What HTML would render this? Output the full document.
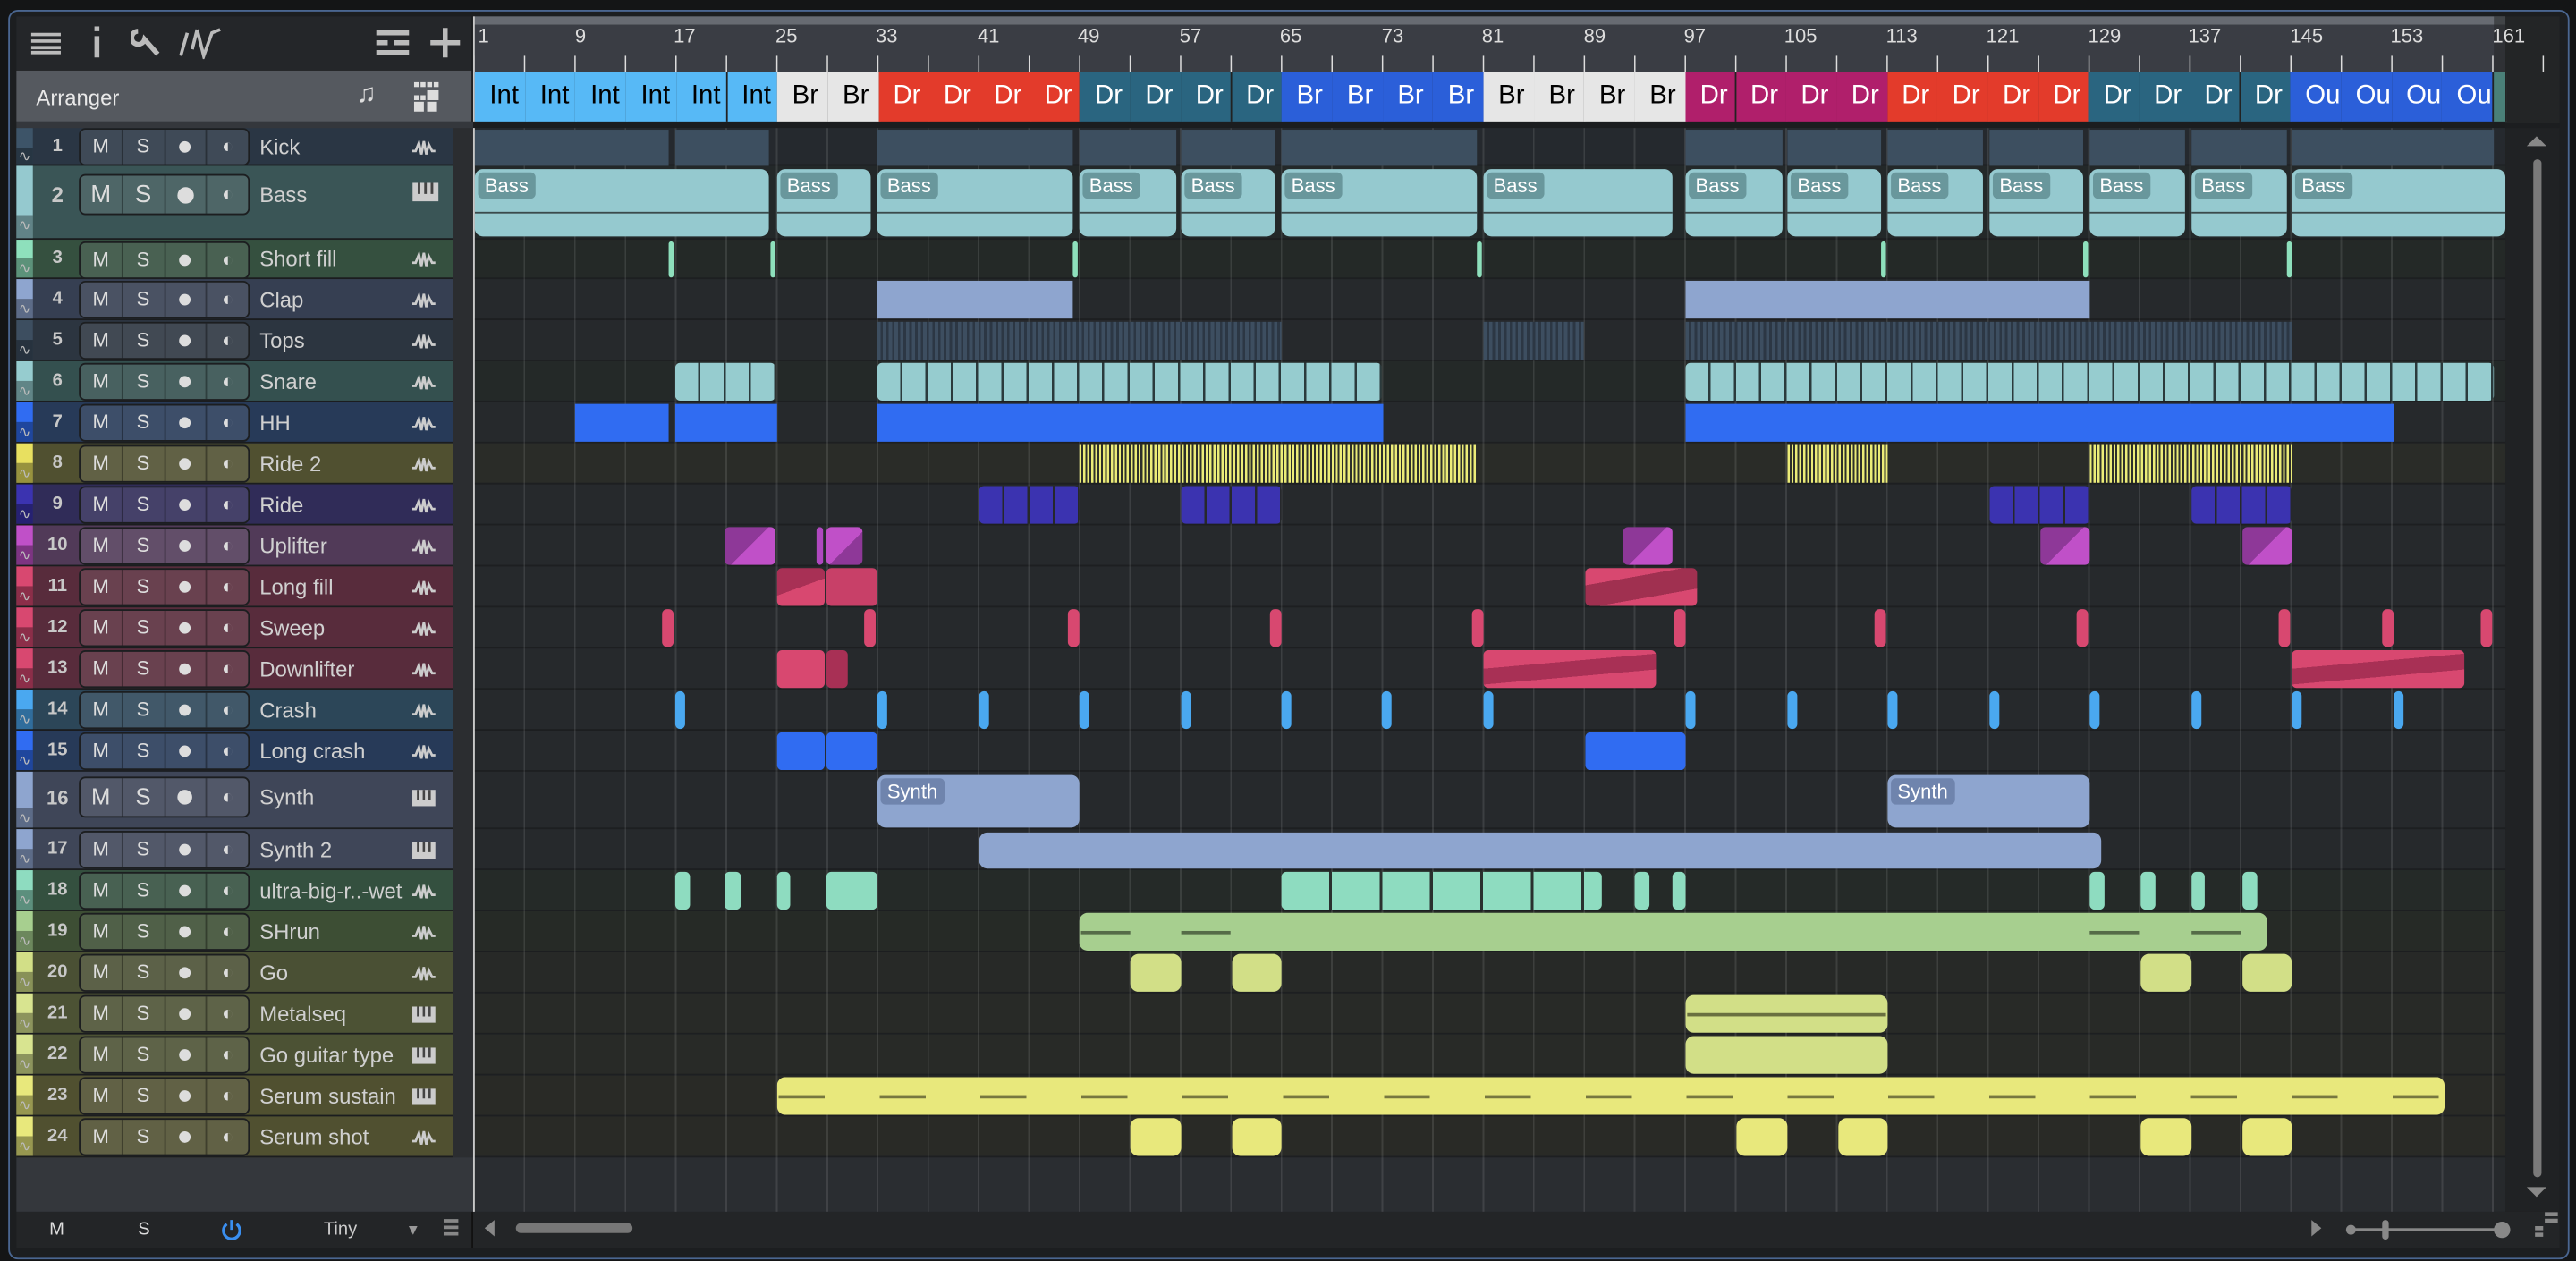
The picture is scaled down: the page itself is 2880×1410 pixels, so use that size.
<!DOCTYPE html>
<html><head><meta charset="utf-8"><style>
html,body{margin:0;padding:0;background:#141516;overflow:hidden;width:2880px;height:1410px}
#s{position:absolute;left:0;top:0;width:1568px;height:768px;transform:scale(1.83674,1.83594);transform-origin:0 0;font-family:"Liberation Sans",sans-serif;background:#141516}
.a{position:absolute}
.frame{left:5px;top:6px;width:1557px;height:759px;border:1px solid #4a6690;border-radius:6px;background:#1c1e20}
.hd{position:absolute;left:10px;width:266px;border-bottom:1px solid #1b1d1f;box-sizing:border-box}
.st{position:absolute;left:0;top:0;width:10px;height:100%}
.st2{position:absolute;left:0;bottom:0;width:10px;height:12px;background:rgba(0,0,0,.35);color:#bbb;font-size:9px;line-height:12px;text-align:center}
.num{position:absolute;left:12px;width:26px;text-align:center;color:#c8c8c8;font-size:11px;font-weight:bold}
.btns{position:absolute;left:38px;width:102px;height:21px;border:1px solid #1c1e20;border-radius:4px;background:rgba(255,255,255,.1);display:flex}
.btns span{flex:1;border-right:1px solid rgba(0,0,0,.35);color:#ddd;font-size:12px;text-align:center;line-height:21px}
.btns span:last-child{border-right:0}
.dot{display:inline-block;width:7px;height:7px;border-radius:50%;background:#ddd;vertical-align:middle}
.nm{position:absolute;left:148px;color:#d0d0d0;font-size:13px}
.ic{position:absolute;left:240px;width:16px;height:10px}
.ln{position:absolute;left:289px;width:1236px;border-bottom:1px solid #1d1f21;box-sizing:border-box}
.c{position:absolute;border-radius:3px;box-sizing:border-box}
.sec{position:absolute;top:44px;height:30px;font-size:16px;line-height:30px;text-indent:9px;overflow:hidden;white-space:nowrap;border-right:1px solid #222}
.lab{position:absolute;left:2px;top:2px;background:rgba(70,110,115,.55);color:#fff;font-size:12px;padding:1px 4px;border-radius:3px}
.rl{position:absolute;top:12px;color:#ddd;font-size:12px}
</style></head><body><div id="s">
<svg width="0" height="0" style="position:absolute"><defs>
<symbol id="wv" viewBox="0 0 16 10"><path d="M1 7h2l2-5 1.5 7 1.5-8 1.5 8 1.5-6 2 4h2" fill="none" stroke="#ccc" stroke-width="1.5"/></symbol>
<symbol id="pn" viewBox="0 0 16 10"><rect x="1" y="0" width="14" height="10" fill="#ccc"/><path d="M4.5 0v6M8 0v6M11.5 0v6" stroke="#444" stroke-width="1.4"/></symbol>
</defs></svg>
<div class="a frame"></div>
<!-- toolbar -->
<div class="a" style="left:10px;top:10px;width:277px;height:33px;background:#242629"></div>
<div class="a" style="left:10px;top:43px;width:277px;height:31px;background:#55595f"></div>
<div class="a" style="left:22px;top:52px;color:#e8e8e8;font-size:13px">Arranger</div>
<svg class="a" style="left:18px;top:18px" width="20" height="16"><path d="M1 3h18M1 7h18M1 11h18M1 14h18" stroke="#bbb" stroke-width="2"/></svg>
<svg class="a" style="left:55px;top:16px" width="8" height="20"><rect x="2.5" y="0" width="3" height="3" fill="#bbb"/><rect x="2.5" y="6" width="3" height="13" fill="#bbb"/></svg>
<svg class="a" style="left:80px;top:16px" width="20" height="20"><path d="M4 3a4 4 0 1 0 4 5l8 9" fill="none" stroke="#bbb" stroke-width="3"/></svg>
<svg class="a" style="left:109px;top:16px" width="28" height="20"><path d="M1 18L5 4M8 14L11 2M11 2L15 18L20 4L25 2" fill="none" stroke="#bbb" stroke-width="2"/></svg>
<svg class="a" style="left:229px;top:18px" width="20" height="16"><path d="M0 2h20M0 8h7M11 8h9M0 14h20" stroke="#bbb" stroke-width="3"/></svg>
<svg class="a" style="left:261px;top:16px" width="20" height="20"><path d="M10 1v18M1 10h18" stroke="#bbb" stroke-width="3"/></svg>
<div class="a" style="left:217px;top:49px;color:#ddd;font-size:16px">♫</div>
<svg class="a" style="left:252px;top:50px" width="18" height="18"><g fill="#ddd"><rect x="0" y="0" width="3" height="3"/><rect x="4" y="0" width="3" height="3"/><rect x="8" y="0" width="3" height="3"/><rect x="12" y="0" width="3" height="3"/><rect x="8" y="5" width="7" height="6"/><rect x="0" y="8" width="3" height="3"/><rect x="4" y="8" width="3" height="3"/><rect x="0" y="12" width="6" height="6"/><rect x="8" y="12" width="6" height="6"/></g></svg>
<!-- ruler -->
<div class="a" style="left:288px;top:10px;width:1237px;height:34px;background:#3a3d44"></div>
<div class="a" style="left:288px;top:10px;width:1237px;height:5px;background:#676b72"></div>
<div class="a" style="left:1518px;top:10px;width:40px;height:65px;background:rgba(40,42,44,.6)"></div>
<div class="a" style="left:288px;top:10px;width:1px;height:728px;background:#c8c8c8"></div>
<div class="rl" style="left:291px;top:15px">1</div><div class="rl" style="left:350px;top:15px">9</div><div class="rl" style="left:410px;top:15px">17</div><div class="rl" style="left:472px;top:15px">25</div><div class="rl" style="left:533px;top:15px">33</div><div class="rl" style="left:595px;top:15px">41</div><div class="rl" style="left:656px;top:15px">49</div><div class="rl" style="left:718px;top:15px">57</div><div class="rl" style="left:779px;top:15px">65</div><div class="rl" style="left:841px;top:15px">73</div><div class="rl" style="left:902px;top:15px">81</div><div class="rl" style="left:964px;top:15px">89</div><div class="rl" style="left:1025px;top:15px">97</div><div class="rl" style="left:1086px;top:15px">105</div><div class="rl" style="left:1148px;top:15px">113</div><div class="rl" style="left:1209px;top:15px">121</div><div class="rl" style="left:1271px;top:15px">129</div><div class="rl" style="left:1332px;top:15px">137</div><div class="rl" style="left:1394px;top:15px">145</div><div class="rl" style="left:1455px;top:15px">153</div><div class="rl" style="left:1517px;top:15px">161</div>
<div class="a" style="left:289px;top:34px;width:1262px;height:10px;background:repeating-linear-gradient(90deg,transparent 0 30px,#ddd 30px 31.72px);background-size:30.72px 10px;background-position:0 0"></div>
<!-- sections -->
<div class="a" style="left:288px;top:74px;width:1237px;height:4px;background:#1b1d1f"></div>
<div id="secs"></div>
<div class="sec" style="left:289px;width:30.7px;background:#57b9f6;color:#000">Int</div><div class="sec" style="left:319.7px;width:30.7px;background:#57b9f6;color:#000">Int</div><div class="sec" style="left:350.4px;width:30.7px;background:#57b9f6;color:#000">Int</div><div class="sec" style="left:381.1px;width:30.7px;background:#57b9f6;color:#000">Int</div><div class="sec" style="left:411.8px;width:30.7px;background:#57b9f6;color:#000">Int</div><div class="sec" style="left:442.5px;width:30.7px;background:#57b9f6;color:#000">Int</div>
<div class="sec" style="left:473.2px;width:30.7px;background:#e6e6e6;color:#000">Br</div><div class="sec" style="left:503.9px;width:30.7px;background:#e6e6e6;color:#000">Br</div>
<div class="sec" style="left:534.6px;width:30.7px;background:#e33b2b;color:#fff">Dr</div><div class="sec" style="left:565.3px;width:30.7px;background:#e33b2b;color:#fff">Dr</div><div class="sec" style="left:596px;width:30.7px;background:#e33b2b;color:#fff">Dr</div><div class="sec" style="left:626.7px;width:30.7px;background:#e33b2b;color:#fff">Dr</div>
<div class="sec" style="left:657.4px;width:30.7px;background:#2a6580;color:#fff">Dr</div><div class="sec" style="left:688.1px;width:30.7px;background:#2a6580;color:#fff">Dr</div><div class="sec" style="left:718.8px;width:30.7px;background:#2a6580;color:#fff">Dr</div><div class="sec" style="left:749.5px;width:30.7px;background:#2a6580;color:#fff">Dr</div>
<div class="sec" style="left:780.2px;width:30.7px;background:#2b5fd9;color:#fff">Br</div><div class="sec" style="left:810.9px;width:30.7px;background:#2b5fd9;color:#fff">Br</div><div class="sec" style="left:841.6px;width:30.7px;background:#2b5fd9;color:#fff">Br</div><div class="sec" style="left:872.3px;width:30.7px;background:#2b5fd9;color:#fff">Br</div>
<div class="sec" style="left:903px;width:30.7px;background:#e6e6e6;color:#000">Br</div><div class="sec" style="left:933.7px;width:30.7px;background:#e6e6e6;color:#000">Br</div><div class="sec" style="left:964.4px;width:30.7px;background:#e6e6e6;color:#000">Br</div><div class="sec" style="left:995.1px;width:30.7px;background:#e6e6e6;color:#000">Br</div>
<div class="sec" style="left:1025.8px;width:30.7px;background:#b01f6b;color:#fff">Dr</div><div class="sec" style="left:1056.5px;width:30.7px;background:#b01f6b;color:#fff">Dr</div><div class="sec" style="left:1087.2px;width:30.7px;background:#b01f6b;color:#fff">Dr</div><div class="sec" style="left:1117.9px;width:30.7px;background:#b01f6b;color:#fff">Dr</div>
<div class="sec" style="left:1148.6px;width:30.7px;background:#e33b2b;color:#fff">Dr</div><div class="sec" style="left:1179.3px;width:30.7px;background:#e33b2b;color:#fff">Dr</div><div class="sec" style="left:1210px;width:30.7px;background:#e33b2b;color:#fff">Dr</div><div class="sec" style="left:1240.7px;width:30.7px;background:#e33b2b;color:#fff">Dr</div>
<div class="sec" style="left:1271.4px;width:30.7px;background:#2a6580;color:#fff">Dr</div><div class="sec" style="left:1302.1px;width:30.7px;background:#2a6580;color:#fff">Dr</div><div class="sec" style="left:1332.8px;width:30.7px;background:#2a6580;color:#fff">Dr</div><div class="sec" style="left:1363.5px;width:30.7px;background:#2a6580;color:#fff">Dr</div>
<div class="sec" style="left:1394.2px;width:30.7px;background:#2b5fd9;color:#fff">Ou</div><div class="sec" style="left:1424.9px;width:30.7px;background:#2b5fd9;color:#fff">Ou</div><div class="sec" style="left:1455.6px;width:30.7px;background:#2b5fd9;color:#fff">Ou</div><div class="sec" style="left:1486.3px;width:31px;background:#2b5fd9;color:#fff">Ou</div>
<div class="sec" style="left:1517.5px;width:7px;background:#4a8078"></div>
<!-- lane area -->
<div class="a" style="left:289px;top:78px;width:1236px;height:660px;background:#26292c"></div>
<div class="a" style="left:1525px;top:78px;width:33px;height:660px;background:#202224"></div>
<div class="ln" style="top:78px;height:23px;background:#25292e"></div>
<div class="ln" style="top:101px;height:45px;background:#232829"></div>
<div class="ln" style="top:146px;height:24px;background:#242927"></div>
<div class="ln" style="top:170px;height:25px"></div><div class="ln" style="top:195px;height:25px"></div>
<div class="ln" style="top:220px;height:25px;background:#242928"></div><div class="ln" style="top:245px;height:25px"></div>
<div class="ln" style="top:270px;height:25px;background:#2a2c28"></div><div class="ln" style="top:295px;height:25px"></div>
<div class="ln" style="top:320px;height:25px"></div><div class="ln" style="top:345px;height:25px"></div><div class="ln" style="top:370px;height:25px"></div><div class="ln" style="top:395px;height:25px"></div><div class="ln" style="top:420px;height:25px"></div><div class="ln" style="top:445px;height:25px"></div><div class="ln" style="top:470px;height:35px"></div><div class="ln" style="top:505px;height:25px"></div>
<div class="ln" style="top:530px;height:25px;background:#252a28"></div><div class="ln" style="top:555px;height:25px;background:#262a26"></div><div class="ln" style="top:580px;height:25px;background:#272927"></div><div class="ln" style="top:605px;height:25px;background:#282a27"></div><div class="ln" style="top:630px;height:25px;background:#282a27"></div><div class="ln" style="top:655px;height:25px;background:#292a26"></div><div class="ln" style="top:680px;height:25px;background:#292a26"></div>
<div class="a" style="left:289px;top:705px;width:1229px;height:33px;background:#2a2d31"></div>
<div class="a" style="left:289px;top:78px;width:1229px;height:660px;background:repeating-linear-gradient(90deg,transparent 0 29.72px,rgba(255,255,255,.1) 29.72px 30.72px)"></div>
<!-- clips -->
<div id="clips">
<!-- kick -->
<div class="c" style="top:79px;height:22px;left:289px;width:118px;background:#3d4f60;border-radius:0"></div><div class="c" style="top:79px;height:22px;left:411px;width:57px;background:#3d4f60;border-radius:0"></div><div class="c" style="top:79px;height:22px;left:534px;width:119px;background:#3d4f60;border-radius:0"></div><div class="c" style="top:79px;height:22px;left:657px;width:59px;background:#3d4f60;border-radius:0"></div><div class="c" style="top:79px;height:22px;left:719px;width:57px;background:#3d4f60;border-radius:0"></div><div class="c" style="top:79px;height:22px;left:780px;width:119px;background:#3d4f60;border-radius:0"></div><div class="c" style="top:79px;height:22px;left:1026px;width:59px;background:#3d4f60;border-radius:0"></div><div class="c" style="top:79px;height:22px;left:1088px;width:57px;background:#3d4f60;border-radius:0"></div><div class="c" style="top:79px;height:22px;left:1149px;width:58px;background:#3d4f60;border-radius:0"></div><div class="c" style="top:79px;height:22px;left:1211px;width:57px;background:#3d4f60;border-radius:0"></div><div class="c" style="top:79px;height:22px;left:1272px;width:58px;background:#3d4f60;border-radius:0"></div><div class="c" style="top:79px;height:22px;left:1334px;width:58px;background:#3d4f60;border-radius:0"></div><div class="c" style="top:79px;height:22px;left:1395px;width:123px;background:#3d4f60;border-radius:0"></div>
<!-- bass -->
<div class="c" style="top:103px;height:41px;left:289px;width:179px;background:#95c9cf;border-radius:5px"><span class="lab">Bass</span><div class="a" style="left:0;right:0;top:26px;height:1px;background:#3a4a4c"></div></div>
<div class="c" style="top:103px;height:41px;left:473px;width:57px;background:#95c9cf;border-radius:5px"><span class="lab">Bass</span><div class="a" style="left:0;right:0;top:26px;height:1px;background:#3a4a4c"></div></div>
<div class="c" style="top:103px;height:41px;left:534px;width:119px;background:#95c9cf;border-radius:5px"><span class="lab">Bass</span><div class="a" style="left:0;right:0;top:26px;height:1px;background:#3a4a4c"></div></div>
<div class="c" style="top:103px;height:41px;left:657px;width:59px;background:#95c9cf;border-radius:5px"><span class="lab">Bass</span><div class="a" style="left:0;right:0;top:26px;height:1px;background:#3a4a4c"></div></div>
<div class="c" style="top:103px;height:41px;left:719px;width:57px;background:#95c9cf;border-radius:5px"><span class="lab">Bass</span><div class="a" style="left:0;right:0;top:26px;height:1px;background:#3a4a4c"></div></div>
<div class="c" style="top:103px;height:41px;left:780px;width:119px;background:#95c9cf;border-radius:5px"><span class="lab">Bass</span><div class="a" style="left:0;right:0;top:26px;height:1px;background:#3a4a4c"></div></div>
<div class="c" style="top:103px;height:41px;left:903px;width:115px;background:#95c9cf;border-radius:5px"><span class="lab">Bass</span><div class="a" style="left:0;right:0;top:26px;height:1px;background:#3a4a4c"></div></div>
<div class="c" style="top:103px;height:41px;left:1026px;width:59px;background:#95c9cf;border-radius:5px"><span class="lab">Bass</span><div class="a" style="left:0;right:0;top:26px;height:1px;background:#3a4a4c"></div></div>
<div class="c" style="top:103px;height:41px;left:1088px;width:57px;background:#95c9cf;border-radius:5px"><span class="lab">Bass</span><div class="a" style="left:0;right:0;top:26px;height:1px;background:#3a4a4c"></div></div>
<div class="c" style="top:103px;height:41px;left:1149px;width:58px;background:#95c9cf;border-radius:5px"><span class="lab">Bass</span><div class="a" style="left:0;right:0;top:26px;height:1px;background:#3a4a4c"></div></div>
<div class="c" style="top:103px;height:41px;left:1211px;width:57px;background:#95c9cf;border-radius:5px"><span class="lab">Bass</span><div class="a" style="left:0;right:0;top:26px;height:1px;background:#3a4a4c"></div></div>
<div class="c" style="top:103px;height:41px;left:1272px;width:58px;background:#95c9cf;border-radius:5px"><span class="lab">Bass</span><div class="a" style="left:0;right:0;top:26px;height:1px;background:#3a4a4c"></div></div>
<div class="c" style="top:103px;height:41px;left:1334px;width:58px;background:#95c9cf;border-radius:5px"><span class="lab">Bass</span><div class="a" style="left:0;right:0;top:26px;height:1px;background:#3a4a4c"></div></div>
<div class="c" style="top:103px;height:41px;left:1395px;width:130px;background:#95c9cf;border-radius:5px"><span class="lab">Bass</span><div class="a" style="left:0;right:0;top:26px;height:1px;background:#3a4a4c"></div></div>
<!-- short fill -->
<div class="c" style="top:147px;height:22px;left:407px;width:3px;background:#8ee0bc"></div><div class="c" style="top:147px;height:22px;left:469px;width:3px;background:#8ee0bc"></div><div class="c" style="top:147px;height:22px;left:653px;width:3px;background:#8ee0bc"></div><div class="c" style="top:147px;height:22px;left:899px;width:3px;background:#8ee0bc"></div><div class="c" style="top:147px;height:22px;left:1145px;width:3px;background:#8ee0bc"></div><div class="c" style="top:147px;height:22px;left:1268px;width:3px;background:#8ee0bc"></div><div class="c" style="top:147px;height:22px;left:1392px;width:3px;background:#8ee0bc"></div>
<!-- clap -->
<div class="c" style="top:171px;height:23px;left:534px;width:119px;background:#8ea5cf;border-radius:0"></div><div class="c" style="top:171px;height:23px;left:1026px;width:246px;background:#8ea5cf;border-radius:0"></div>
<!-- tops -->
<div class="c" style="top:196px;height:23px;left:534px;width:246px;background:repeating-linear-gradient(90deg,#3d4e60 0 2px,#2c3744 2px 3.5px);border-radius:0"></div><div class="c" style="top:196px;height:23px;left:903px;width:61px;background:repeating-linear-gradient(90deg,#3d4e60 0 2px,#2c3744 2px 3.5px);border-radius:0"></div><div class="c" style="top:196px;height:23px;left:1026px;width:369px;background:repeating-linear-gradient(90deg,#3d4e60 0 2px,#2c3744 2px 3.5px);border-radius:0"></div>
<!-- snare -->
<div class="c" style="top:221px;height:23px;left:411px;width:61px;background:repeating-linear-gradient(90deg,#96cccf 0 14px,#2b3a3c 14px 15.36px)"></div><div class="c" style="top:221px;height:23px;left:534px;width:307px;background:repeating-linear-gradient(90deg,#96cccf 0 14px,#2b3a3c 14px 15.36px)"></div><div class="c" style="top:221px;height:23px;left:1026px;width:492px;background:repeating-linear-gradient(90deg,#96cccf 0 14px,#2b3a3c 14px 15.36px)"></div>
<!-- HH -->
<div class="c" style="top:246px;height:23px;left:350px;width:57px;background:#306cf2;border-radius:0"></div><div class="c" style="top:246px;height:23px;left:411px;width:62px;background:#306cf2;border-radius:0"></div><div class="c" style="top:246px;height:23px;left:534px;width:308px;background:#306cf2;border-radius:0"></div><div class="c" style="top:246px;height:23px;left:1026px;width:431px;background:#306cf2;border-radius:0"></div>
<!-- ride2 -->
<div class="c" style="top:271px;height:23px;left:657px;width:242px;background:repeating-linear-gradient(90deg,#ecec78 0 1.3px,#2d2f2a 1.3px 2.4px);border-radius:0"></div><div class="c" style="top:271px;height:23px;left:1088px;width:61px;background:repeating-linear-gradient(90deg,#ecec78 0 1.3px,#2d2f2a 1.3px 2.4px);border-radius:0"></div><div class="c" style="top:271px;height:23px;left:1272px;width:123px;background:repeating-linear-gradient(90deg,#ecec78 0 1.3px,#2d2f2a 1.3px 2.4px);border-radius:0"></div>
<!-- ride -->
<div class="c" style="top:296px;height:23px;left:596px;width:61px;background:repeating-linear-gradient(90deg,#3b33b0 0 14px,#26282c 14px 15.36px)"></div><div class="c" style="top:296px;height:23px;left:719px;width:61px;background:repeating-linear-gradient(90deg,#3b33b0 0 14px,#26282c 14px 15.36px)"></div><div class="c" style="top:296px;height:23px;left:1211px;width:61px;background:repeating-linear-gradient(90deg,#3b33b0 0 14px,#26282c 14px 15.36px)"></div><div class="c" style="top:296px;height:23px;left:1334px;width:61px;background:repeating-linear-gradient(90deg,#3b33b0 0 14px,#26282c 14px 15.36px)"></div>
<!-- uplifter -->
<div class="c" style="top:321px;height:23px;left:441px;width:31px;background:linear-gradient(135deg,#8e3898 50%,#c050c8 50%)"></div><div class="c" style="top:321px;height:23px;left:497px;width:4px;background:#b048c0"></div><div class="c" style="top:321px;height:23px;left:503px;width:22px;background:linear-gradient(135deg,#c050c8 55%,#8e3898 55%)"></div><div class="c" style="top:321px;height:23px;left:988px;width:30px;background:linear-gradient(135deg,#8e3898 50%,#c050c8 50%)"></div><div class="c" style="top:321px;height:23px;left:1242px;width:30px;background:linear-gradient(135deg,#8e3898 50%,#c050c8 50%)"></div><div class="c" style="top:321px;height:23px;left:1365px;width:30px;background:linear-gradient(135deg,#8e3898 50%,#c050c8 50%)"></div>
<!-- long fill -->
<div class="c" style="top:346px;height:23px;left:473px;width:29px;background:linear-gradient(160deg,#a83055 50%,#d84870 50%)"></div><div class="c" style="top:346px;height:23px;left:503px;width:31px;background:#c84068"></div><div class="c" style="top:346px;height:23px;left:965px;width:68px;background:linear-gradient(170deg,#d84870 30%,#a03050 30% 70%,#d84870 70%)"></div>
<!-- sweep -->
<div class="c" style="top:371px;height:23px;left:403px;width:7px;background:#d84870"></div><div class="c" style="top:371px;height:23px;left:526px;width:7px;background:#d84870"></div><div class="c" style="top:371px;height:23px;left:650px;width:7px;background:#d84870"></div><div class="c" style="top:371px;height:23px;left:773px;width:7px;background:#d84870"></div><div class="c" style="top:371px;height:23px;left:896px;width:7px;background:#d84870"></div><div class="c" style="top:371px;height:23px;left:1019px;width:7px;background:#d84870"></div><div class="c" style="top:371px;height:23px;left:1141px;width:7px;background:#d84870"></div><div class="c" style="top:371px;height:23px;left:1264px;width:7px;background:#d84870"></div><div class="c" style="top:371px;height:23px;left:1387px;width:7px;background:#d84870"></div><div class="c" style="top:371px;height:23px;left:1450px;width:7px;background:#d84870"></div><div class="c" style="top:371px;height:23px;left:1510px;width:7px;background:#d84870"></div>
<!-- downlifter -->
<div class="c" style="top:396px;height:23px;left:473px;width:29px;background:#d84870"></div><div class="c" style="top:396px;height:23px;left:503px;width:13px;background:#a83055"></div><div class="c" style="top:396px;height:23px;left:903px;width:105px;background:linear-gradient(175deg,#d84870 35%,#a83055 35% 65%,#d84870 65%)"></div><div class="c" style="top:396px;height:23px;left:1395px;width:105px;background:linear-gradient(175deg,#d84870 35%,#a83055 35% 65%,#d84870 65%)"></div>
<!-- crash -->
<div class="c" style="top:421px;height:23px;left:411px;width:6px;background:#4aa8f0"></div><div class="c" style="top:421px;height:23px;left:534px;width:6px;background:#4aa8f0"></div><div class="c" style="top:421px;height:23px;left:596px;width:6px;background:#4aa8f0"></div><div class="c" style="top:421px;height:23px;left:657px;width:6px;background:#4aa8f0"></div><div class="c" style="top:421px;height:23px;left:719px;width:6px;background:#4aa8f0"></div><div class="c" style="top:421px;height:23px;left:780px;width:6px;background:#4aa8f0"></div><div class="c" style="top:421px;height:23px;left:841px;width:6px;background:#4aa8f0"></div><div class="c" style="top:421px;height:23px;left:903px;width:6px;background:#4aa8f0"></div><div class="c" style="top:421px;height:23px;left:1026px;width:6px;background:#4aa8f0"></div><div class="c" style="top:421px;height:23px;left:1088px;width:6px;background:#4aa8f0"></div><div class="c" style="top:421px;height:23px;left:1149px;width:6px;background:#4aa8f0"></div><div class="c" style="top:421px;height:23px;left:1211px;width:6px;background:#4aa8f0"></div><div class="c" style="top:421px;height:23px;left:1272px;width:6px;background:#4aa8f0"></div><div class="c" style="top:421px;height:23px;left:1334px;width:6px;background:#4aa8f0"></div><div class="c" style="top:421px;height:23px;left:1395px;width:6px;background:#4aa8f0"></div><div class="c" style="top:421px;height:23px;left:1457px;width:6px;background:#4aa8f0"></div>
<!-- long crash -->
<div class="c" style="top:446px;height:23px;left:473px;width:29px;background:#306cf2"></div><div class="c" style="top:446px;height:23px;left:503px;width:31px;background:#306cf2"></div><div class="c" style="top:446px;height:23px;left:965px;width:61px;background:#306cf2"></div>
<!-- synth -->
<div class="c" style="top:472px;height:32px;left:534px;width:123px;background:#8ea5cf;border-radius:5px"><span class="lab" style="background:rgba(90,110,150,.6)">Synth</span></div><div class="c" style="top:472px;height:32px;left:1149px;width:123px;background:#8ea5cf;border-radius:5px"><span class="lab" style="background:rgba(90,110,150,.6)">Synth</span></div>
<div class="c" style="top:507px;height:22px;left:596px;width:683px;background:#8ea5cf;border-radius:5px"></div>
<!-- ultra -->
<div class="c" style="top:531px;height:23px;left:411px;width:9px;background:#8edcc0"></div><div class="c" style="top:531px;height:23px;left:441px;width:10px;background:#8edcc0"></div><div class="c" style="top:531px;height:23px;left:473px;width:8px;background:#8edcc0"></div><div class="c" style="top:531px;height:23px;left:503px;width:31px;background:#8edcc0"></div><div class="c" style="top:531px;height:23px;left:780px;width:195px;background:repeating-linear-gradient(90deg,#8edcc0 0 29px,#2a302e 29px 30.7px)"></div><div class="c" style="top:531px;height:23px;left:995px;width:9px;background:#8edcc0"></div><div class="c" style="top:531px;height:23px;left:1018px;width:8px;background:#8edcc0"></div><div class="c" style="top:531px;height:23px;left:1272px;width:9px;background:#8edcc0"></div><div class="c" style="top:531px;height:23px;left:1303px;width:9px;background:#8edcc0"></div><div class="c" style="top:531px;height:23px;left:1334px;width:8px;background:#8edcc0"></div><div class="c" style="top:531px;height:23px;left:1365px;width:9px;background:#8edcc0"></div>
<!-- shrun -->
<div class="c" style="top:556px;height:23px;left:657px;width:723px;background:#a7cf8f;border-radius:5px"><div class="a" style="left:1px;top:11px;width:30px;height:2px;background:#556b48"></div><div class="a" style="left:62px;top:11px;width:30px;height:2px;background:#556b48"></div><div class="a" style="left:615px;top:11px;width:30px;height:2px;background:#556b48"></div><div class="a" style="left:677px;top:11px;width:30px;height:2px;background:#556b48"></div></div>
<!-- go -->
<div class="c" style="top:581px;height:23px;left:688px;width:31px;background:#d2df87;border-radius:5px"></div><div class="c" style="top:581px;height:23px;left:750px;width:30px;background:#d2df87;border-radius:5px"></div><div class="c" style="top:581px;height:23px;left:1303px;width:31px;background:#d2df87;border-radius:5px"></div><div class="c" style="top:581px;height:23px;left:1365px;width:30px;background:#d2df87;border-radius:5px"></div>
<div class="c" style="top:606px;height:23px;left:1026px;width:123px;background:#d2df87;border-radius:5px"><div class="a" style="left:1px;right:1px;top:11px;height:2px;background:#6a7040"></div></div>
<div class="c" style="top:631px;height:23px;left:1026px;width:123px;background:#d2df87;border-radius:5px"></div>
<!-- serum -->
<div class="c" style="top:656px;height:23px;left:473px;width:1015px;background:#e8e87c;border-radius:5px;background-image:repeating-linear-gradient(90deg,transparent 0 1px,#77773f 1px 29px,transparent 29px 61.4px);background-size:100% 2px;background-repeat:no-repeat;background-position:0 11px"></div>
<div class="c" style="top:681px;height:23px;left:688px;width:31px;background:#e8e87c;border-radius:5px"></div><div class="c" style="top:681px;height:23px;left:750px;width:30px;background:#e8e87c;border-radius:5px"></div><div class="c" style="top:681px;height:23px;left:1057px;width:31px;background:#e8e87c;border-radius:5px"></div><div class="c" style="top:681px;height:23px;left:1119px;width:30px;background:#e8e87c;border-radius:5px"></div><div class="c" style="top:681px;height:23px;left:1303px;width:31px;background:#e8e87c;border-radius:5px"></div><div class="c" style="top:681px;height:23px;left:1365px;width:30px;background:#e8e87c;border-radius:5px"></div>
</div>
<!-- headers -->
<div class="a" style="left:10px;top:74px;width:278px;height:664px;background:#34373c"></div>
<div class="a" style="left:276px;top:78px;width:12px;height:627px;background:#2b2d30"></div>

<div class="hd" style="top:78px;height:23px;background:#2a3644"><div class="st" style="background:#3d5468"></div><div class="st2" style="height:10px;line-height:10px">∿</div><div class="num" style="top:5px">1</div><div class="btns" style="top:0px"><span>M</span><span>S</span><span><i class="dot"></i></span><span>◐</span></div><div class="nm" style="top:4px">Kick</div><svg class="ic" style="top:7px"><use href="#wv"/></svg></div>
<div class="hd" style="top:101px;height:45px;background:#3a5556"><div class="st" style="background:#95c9cf"></div><div class="st2" style="height:14px">∿</div><div class="num" style="top:10px;font-size:13px">2</div><div class="btns" style="top:5px;height:23px"><span style="font-size:15px;line-height:23px">M</span><span style="font-size:15px;line-height:23px">S</span><span style="line-height:23px"><i class="dot" style="width:10px;height:10px"></i></span><span style="line-height:23px">◐</span></div><div class="nm" style="top:10px">Bass</div><svg class="ic" style="top:10px;width:18px;height:12px"><use href="#pn"/></svg></div>
<div class="hd" style="top:146px;height:24px;background:#35503f"><div class="st" style="background:#8ee0bc"></div><div class="st2">∿</div><div class="num" style="top:5px">3</div><div class="btns" style="top:1px"><span>M</span><span>S</span><span><i class="dot"></i></span><span>◐</span></div><div class="nm" style="top:4px">Short fill</div><svg class="ic" style="top:7px"><use href="#wv"/></svg></div>
<div class="hd" style="top:170px;height:25px;background:#363f52"><div class="st" style="background:#8ea5cf"></div><div class="st2">∿</div><div class="num" style="top:6px">4</div><div class="btns" style="top:1px"><span>M</span><span>S</span><span><i class="dot"></i></span><span>◐</span></div><div class="nm" style="top:5px">Clap</div><svg class="ic" style="top:8px"><use href="#wv"/></svg></div>
<div class="hd" style="top:195px;height:25px;background:#2c3540"><div class="st" style="background:#3d4e60"></div><div class="st2">∿</div><div class="num" style="top:6px">5</div><div class="btns" style="top:1px"><span>M</span><span>S</span><span><i class="dot"></i></span><span>◐</span></div><div class="nm" style="top:5px">Tops</div><svg class="ic" style="top:8px"><use href="#wv"/></svg></div>
<div class="hd" style="top:220px;height:25px;background:#34504f"><div class="st" style="background:#96cccf"></div><div class="st2">∿</div><div class="num" style="top:6px">6</div><div class="btns" style="top:1px"><span>M</span><span>S</span><span><i class="dot"></i></span><span>◐</span></div><div class="nm" style="top:5px">Snare</div><svg class="ic" style="top:8px"><use href="#wv"/></svg></div>
<div class="hd" style="top:245px;height:25px;background:#273a58"><div class="st" style="background:#306cf2"></div><div class="st2">∿</div><div class="num" style="top:6px">7</div><div class="btns" style="top:1px"><span>M</span><span>S</span><span><i class="dot"></i></span><span>◐</span></div><div class="nm" style="top:5px">HH</div><svg class="ic" style="top:8px"><use href="#wv"/></svg></div>
<div class="hd" style="top:270px;height:25px;background:#505030"><div class="st" style="background:#e8e060"></div><div class="st2">∿</div><div class="num" style="top:6px">8</div><div class="btns" style="top:1px"><span>M</span><span>S</span><span><i class="dot"></i></span><span>◐</span></div><div class="nm" style="top:5px">Ride 2</div><svg class="ic" style="top:8px"><use href="#wv"/></svg></div>
<div class="hd" style="top:295px;height:25px;background:#302c58"><div class="st" style="background:#3b33b0"></div><div class="st2">∿</div><div class="num" style="top:6px">9</div><div class="btns" style="top:1px"><span>M</span><span>S</span><span><i class="dot"></i></span><span>◐</span></div><div class="nm" style="top:5px">Ride</div><svg class="ic" style="top:8px"><use href="#wv"/></svg></div>
<div class="hd" style="top:320px;height:25px;background:#513a58"><div class="st" style="background:#c050c8"></div><div class="st2">∿</div><div class="num" style="top:6px">10</div><div class="btns" style="top:1px"><span>M</span><span>S</span><span><i class="dot"></i></span><span>◐</span></div><div class="nm" style="top:5px">Uplifter</div><svg class="ic" style="top:8px"><use href="#wv"/></svg></div>
<div class="hd" style="top:345px;height:25px;background:#582c3c"><div class="st" style="background:#d84870"></div><div class="st2">∿</div><div class="num" style="top:6px">11</div><div class="btns" style="top:1px"><span>M</span><span>S</span><span><i class="dot"></i></span><span>◐</span></div><div class="nm" style="top:5px">Long fill</div><svg class="ic" style="top:8px"><use href="#wv"/></svg></div>
<div class="hd" style="top:370px;height:25px;background:#582c3c"><div class="st" style="background:#d84870"></div><div class="st2">∿</div><div class="num" style="top:6px">12</div><div class="btns" style="top:1px"><span>M</span><span>S</span><span><i class="dot"></i></span><span>◐</span></div><div class="nm" style="top:5px">Sweep</div><svg class="ic" style="top:8px"><use href="#wv"/></svg></div>
<div class="hd" style="top:395px;height:25px;background:#582c3c"><div class="st" style="background:#d84870"></div><div class="st2">∿</div><div class="num" style="top:6px">13</div><div class="btns" style="top:1px"><span>M</span><span>S</span><span><i class="dot"></i></span><span>◐</span></div><div class="nm" style="top:5px">Downlifter</div><svg class="ic" style="top:8px"><use href="#wv"/></svg></div>
<div class="hd" style="top:420px;height:25px;background:#2c4658"><div class="st" style="background:#4aa8f0"></div><div class="st2">∿</div><div class="num" style="top:6px">14</div><div class="btns" style="top:1px"><span>M</span><span>S</span><span><i class="dot"></i></span><span>◐</span></div><div class="nm" style="top:5px">Crash</div><svg class="ic" style="top:8px"><use href="#wv"/></svg></div>
<div class="hd" style="top:445px;height:25px;background:#273a58"><div class="st" style="background:#306cf2"></div><div class="st2">∿</div><div class="num" style="top:6px">15</div><div class="btns" style="top:1px"><span>M</span><span>S</span><span><i class="dot"></i></span><span>◐</span></div><div class="nm" style="top:5px">Long crash</div><svg class="ic" style="top:8px"><use href="#wv"/></svg></div>
<div class="hd" style="top:470px;height:35px;background:#3f4658"><div class="st" style="background:#8ea5cf"></div><div class="st2">∿</div><div class="num" style="top:9px;font-size:12px">16</div><div class="btns" style="top:3px;height:23px"><span style="font-size:14px;line-height:23px">M</span><span style="font-size:14px;line-height:23px">S</span><span style="line-height:23px"><i class="dot" style="width:9px;height:9px"></i></span><span style="line-height:23px">◐</span></div><div class="nm" style="top:8px">Synth</div><svg class="ic" style="top:11px"><use href="#pn"/></svg></div>
<div class="hd" style="top:505px;height:25px;background:#3f4658"><div class="st" style="background:#8ea5cf"></div><div class="st2">∿</div><div class="num" style="top:6px">17</div><div class="btns" style="top:1px"><span>M</span><span>S</span><span><i class="dot"></i></span><span>◐</span></div><div class="nm" style="top:5px">Synth 2</div><svg class="ic" style="top:8px"><use href="#pn"/></svg></div>
<div class="hd" style="top:530px;height:25px;background:#34503f"><div class="st" style="background:#8edcc0"></div><div class="st2">∿</div><div class="num" style="top:6px">18</div><div class="btns" style="top:1px"><span>M</span><span>S</span><span><i class="dot"></i></span><span>◐</span></div><div class="nm" style="top:5px">ultra-big-r..-wet</div><svg class="ic" style="top:8px"><use href="#wv"/></svg></div>
<div class="hd" style="top:555px;height:25px;background:#3d4e34"><div class="st" style="background:#a7cf8f"></div><div class="st2">∿</div><div class="num" style="top:6px">19</div><div class="btns" style="top:1px"><span>M</span><span>S</span><span><i class="dot"></i></span><span>◐</span></div><div class="nm" style="top:5px">SHrun</div><svg class="ic" style="top:8px"><use href="#wv"/></svg></div>
<div class="hd" style="top:580px;height:25px;background:#4a5034"><div class="st" style="background:#d2df87"></div><div class="st2">∿</div><div class="num" style="top:6px">20</div><div class="btns" style="top:1px"><span>M</span><span>S</span><span><i class="dot"></i></span><span>◐</span></div><div class="nm" style="top:5px">Go</div><svg class="ic" style="top:8px"><use href="#wv"/></svg></div>
<div class="hd" style="top:605px;height:25px;background:#4c5234"><div class="st" style="background:#d8e490"></div><div class="st2">∿</div><div class="num" style="top:6px">21</div><div class="btns" style="top:1px"><span>M</span><span>S</span><span><i class="dot"></i></span><span>◐</span></div><div class="nm" style="top:5px">Metalseq</div><svg class="ic" style="top:8px"><use href="#pn"/></svg></div>
<div class="hd" style="top:630px;height:25px;background:#4c5234"><div class="st" style="background:#d8e490"></div><div class="st2">∿</div><div class="num" style="top:6px">22</div><div class="btns" style="top:1px"><span>M</span><span>S</span><span><i class="dot"></i></span><span>◐</span></div><div class="nm" style="top:5px">Go guitar type</div><svg class="ic" style="top:8px"><use href="#pn"/></svg></div>
<div class="hd" style="top:655px;height:25px;background:#505030"><div class="st" style="background:#e8e87c"></div><div class="st2">∿</div><div class="num" style="top:6px">23</div><div class="btns" style="top:1px"><span>M</span><span>S</span><span><i class="dot"></i></span><span>◐</span></div><div class="nm" style="top:5px">Serum sustain</div><svg class="ic" style="top:8px"><use href="#pn"/></svg></div>
<div class="hd" style="top:680px;height:25px;background:#505030"><div class="st" style="background:#e8e87c"></div><div class="st2">∿</div><div class="num" style="top:6px">24</div><div class="btns" style="top:1px"><span>M</span><span>S</span><span><i class="dot"></i></span><span>◐</span></div><div class="nm" style="top:5px">Serum shot</div><svg class="ic" style="top:8px"><use href="#wv"/></svg></div>
<div class="a" style="left:288px;top:78px;width:1px;height:660px;background:#c8c8c8"></div>
<!-- footer -->
<div class="a" style="left:10px;top:738px;width:1548px;height:22px;background:#232527"></div>
<div class="a" style="left:287px;top:738px;width:1px;height:22px;background:#111"></div>
<div class="a" style="left:30px;top:743px;color:#ddd;font-size:11px">M</div>
<div class="a" style="left:84px;top:743px;color:#ddd;font-size:11px">S</div>
<svg class="a" style="left:135px;top:742px" width="12" height="13"><path d="M3 3.5a5 5 0 1 0 6 0M6 1v6" fill="none" stroke="#3a8ff0" stroke-width="1.8"/></svg>
<div class="a" style="left:197px;top:743px;color:#ccc;font-size:11px">Tiny</div>
<div class="a" style="left:247px;top:744px;color:#999;font-size:9px">▼</div>
<svg class="a" style="left:270px;top:742px" width="9" height="12"><path d="M0 1.5h9M0 5.5h9M0 9.5h9" stroke="#888" stroke-width="2"/></svg>
<div class="a" style="left:295px;top:743px;width:0;height:0;border-top:5px solid transparent;border-bottom:5px solid transparent;border-right:6px solid #888"></div>
<div class="a" style="left:314px;top:745px;width:71px;height:6px;border-radius:3px;background:#777"></div>
<div class="a" style="left:1407px;top:743px;width:0;height:0;border-top:5px solid transparent;border-bottom:5px solid transparent;border-left:6px solid #888"></div>
<div class="a" style="left:1432px;top:748px;width:90px;height:2px;background:#888"></div>
<div class="a" style="left:1428px;top:746px;width:6px;height:6px;border-radius:50%;background:#888"></div>
<div class="a" style="left:1450px;top:743px;width:4px;height:12px;border-radius:2px;background:#888"></div>
<div class="a" style="left:1518px;top:744px;width:10px;height:10px;border-radius:50%;background:#888"></div>
<!-- right scrollbar -->
<div class="a" style="left:1839px;top:0"></div>
<div class="a" style="left:1538px;top:83px;width:0;height:0;border-left:6px solid transparent;border-right:6px solid transparent;border-bottom:6px solid #888"></div>
<div class="a" style="left:1542px;top:97px;width:5px;height:620px;border-radius:3px;background:#7a7a7a"></div>
<div class="a" style="left:1538px;top:723px;width:0;height:0;border-left:6px solid transparent;border-right:6px solid transparent;border-top:6px solid #888"></div>
<svg class="a" style="left:1543px;top:738px" width="14" height="16"><path d="M6 1.5h8M6 5.5h8M0 10h5M0 14h5" stroke="#888" stroke-width="2.5"/></svg>
</div></body></html>
